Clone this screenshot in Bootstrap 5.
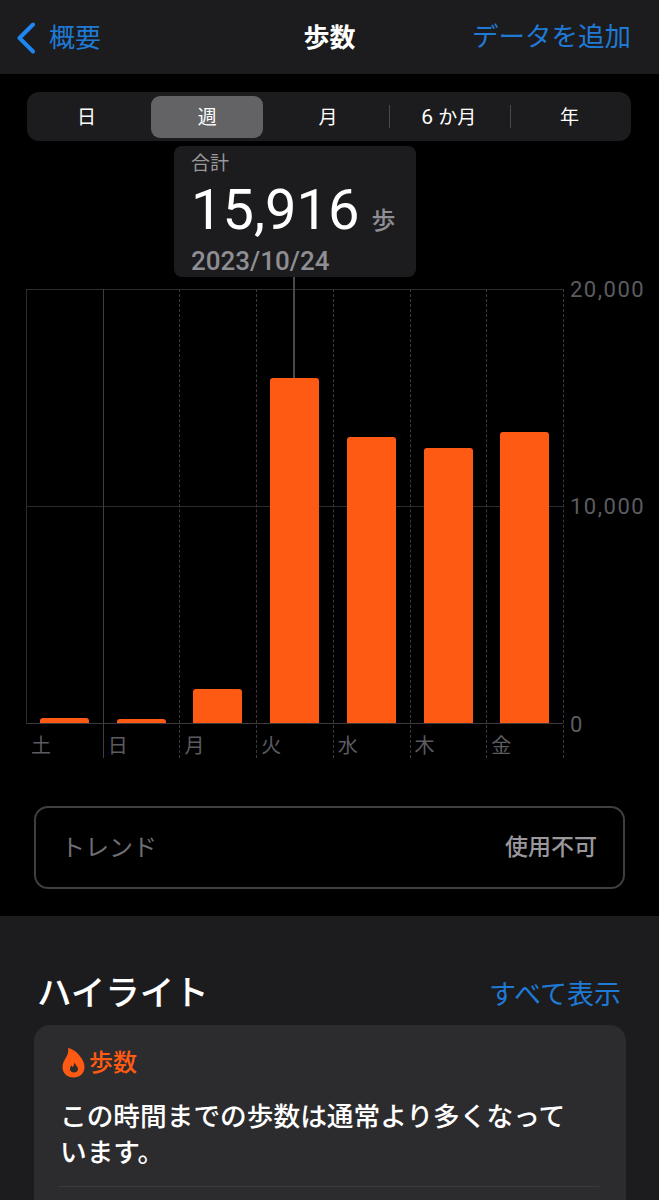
<!DOCTYPE html>
<html lang="ja">
<head>
    <meta charset="UTF-8">
    <meta name="viewport" content="width=device-width, initial-scale=1.0">
    <title>歩数</title>
    <link href="https://cdn.jsdelivr.net/npm/bootstrap@5.3.0/dist/css/bootstrap.min.css" rel="stylesheet">
    <style>
        body {
            background: #000;
            color: #fff;
            font-family: "Liberation Sans", "Noto Sans CJK JP", sans-serif;
            overflow: hidden;
            height: 1200px;
        }
        .top-bar {
            height: 74px;
            background: #1c1c1e;
            padding: 2px 28px 0 16px;
            position: relative;
        }
        .blue-text { color: #1f7ad6; }
        .back-label { font-size: 26px; margin-left: 13px; margin-top: 1px; }
        .bar-title {
            position: absolute;
            left: 0;
            right: 0;
            text-align: center;
            font-size: 26px;
            font-weight: 700;
        }
        .add-label { font-size: 26.5px; }
        .range-picker {
            height: 49px;
            margin: 18px 28px 0 27px;
            background: #1c1c1e;
            border-radius: 12px;
        }
        .range-item {
            flex: 1 1 0;
            font-size: 19px;
            position: relative;
            height: 100%;
            padding-top: 3px;
            padding-right: 2px;
        }
        .range-item.is-active::before {
            content: "";
            position: absolute;
            inset: 4px 6px 3px 3px;
            background: #636366;
            border-radius: 9px;
        }
        .range-item span { position: relative; }
        .range-six { font-size: 21px; font-family: Roboto, sans-serif; }
        .range-item.has-rule::after {
            content: "";
            position: absolute;
            left: 0;
            top: 13px;
            bottom: 13px;
            width: 1px;
            background: #48484a;
        }
        .chart-wrap {
            position: relative;
            height: 635px;
            margin-left: 26px;
        }
        .sum-tip {
            position: absolute;
            left: 148px;
            top: 5px;
            width: 242px;
            height: 131px;
            background: #1c1c1e;
            border-radius: 8px;
            padding: 4px 17px;
            z-index: 2;
            white-space: nowrap;
        }
        .sum-caption { font-size: 19px; line-height: 27px; color: #98989d; }
        .sum-value { font-family: Roboto, "Noto Sans CJK JP", sans-serif; font-size: 56px; line-height: 60px; margin-top: 3px; font-weight: 450; }
        .sum-unit { font-size: 24px; color: #8e8e93; margin-left: 12px; font-weight: 500; }
        .sum-date { font-family: Roboto, sans-serif; font-size: 26px; line-height: 32px; color: #8e8e93; margin-top: -6px; font-weight: 500; }
        .tip-stem {
            position: absolute;
            left: 267px;
            top: 136px;
            width: 2px;
            height: 102px;
            background: #48484a;
            z-index: 1;
        }
        .week-grid {
            position: absolute;
            left: 1px;
            top: 148px;
            width: 537px;
            height: 469px;
            display: grid;
            grid-template-columns: repeat(7, 1fr);
        }
        .week-grid::before {
            content: "";
            position: absolute;
            left: -1px;
            top: 0;
            width: 1px;
            height: 435px;
            background: #2c2c2e;
        }
        .week-col {
            position: relative;
            border-right: 1px dashed #3a3a3c;
        }
        .week-col.solid-edge { border-right: 1px solid #3f3f41; }
        .week-plot {
            height: 434px;
            display: flex;
            align-items: flex-end;
            padding-left: 13px;
        }
        .week-bar {
            width: 49px;
            background: #ff5a13;
            border-radius: 3px 3px 0 0;
            position: relative;
            z-index: 1;
        }
        .week-name {
            font-size: 20px;
            line-height: 24px;
            padding: 11px 0 0 4px;
            color: #5c5c60;
        }
        .h-rule {
            position: absolute;
            left: 0;
            width: 537px;
            height: 1px;
            background: #2c2c2e;
        }
        .h-rule.base { background: #3a3a3c; }
        .y-label {
            position: absolute;
            left: 544px;
            font-family: Roboto, sans-serif;
            font-size: 22px;
            line-height: 24px;
            letter-spacing: 1.5px;
            color: #5c5c60;
        }
        .trend-box {
            height: 83px;
            margin: 30px 34px 0 34px;
            border: 2px solid #3f3f41;
            border-radius: 14px;
            padding: 0 26px 0 25px;
            color: #6e6e73;
            font-size: 24px;
        }
        .trend-value { color: #98989d; font-weight: 500; font-size: 23px; }
        .lower-sheet {
            margin-top: 27px;
            background: #1c1c1e;
            height: 284px;
            padding: 0 33px 0 34px;
        }
        .sheet-head { height: 109px; padding: 50px 5px 0 3px; }
        .sheet-title { font-size: 34.5px; line-height: 54px; font-weight: 500; margin: 0; }
        .sheet-link { font-size: 27px; line-height: 54px; padding-top: 2px; }
        .note-panel {
            height: 190px;
            background: #2c2c2e;
            border-radius: 16px 16px 0 0;
            padding: 21px 40px 0 28px;
        }
        .note-tag { color: #ff5a13; font-size: 24px; font-weight: 500; line-height: 34px; gap: 4px; }
        .note-text { font-size: 26.7px; line-height: 36px; font-weight: 500; margin: 19px 0 0 -2px; }
        .note-rule { border-top: 1px solid #3a3a3c; margin: 15px -13px 0 -4px; }
    </style>
</head>
<body>
    <!-- Navigation Bar -->
    <div class="top-bar d-flex align-items-center justify-content-between">
        <div class="d-flex align-items-center blue-text">
            <svg width="20" height="32" viewBox="0 0 20 32" fill="none">
                <path d="M17 2.500 3.500 16 17 29.500" stroke="#1f86f0" stroke-width="4" stroke-linecap="round" stroke-linejoin="round"/>
            </svg>
            <span class="back-label">概要</span>
        </div>
        <div class="bar-title">歩数</div>
        <div class="add-label blue-text">データを追加</div>
    </div>

    <!-- Range picker -->
    <div class="range-picker d-flex align-items-center">
        <div class="range-item d-flex align-items-center justify-content-center"><span>日</span></div>
        <div class="range-item is-active d-flex align-items-center justify-content-center"><span>週</span></div>
        <div class="range-item d-flex align-items-center justify-content-center"><span>月</span></div>
        <div class="range-item has-rule d-flex align-items-center justify-content-center"><span><span class="range-six">6</span> か月</span></div>
        <div class="range-item has-rule d-flex align-items-center justify-content-center"><span>年</span></div>
    </div>

    <!-- Chart -->
    <div class="chart-wrap">
        <div class="sum-tip">
            <div class="sum-caption">合計</div>
            <div class="sum-value">15,916<span class="sum-unit">歩</span></div>
            <div class="sum-date">2023/10/24</div>
        </div>
        <div class="tip-stem"></div>
        <div class="h-rule" style="top: 148px"></div>
        <div class="h-rule" style="top: 365px"></div>
        <div class="h-rule base" style="top: 582px"></div>
        <div class="week-grid" id="weekGrid"></div>
        <div class="y-label" style="top: 137px">20,000</div>
        <div class="y-label" style="top: 354px">10,000</div>
        <div class="y-label" style="top: 572px">0</div>
    </div>

    <!-- Trend -->
    <div class="trend-box d-flex align-items-center justify-content-between">
        <span>トレンド</span>
        <span class="trend-value">使用不可</span>
    </div>

    <!-- Highlights -->
    <div class="lower-sheet">
        <div class="sheet-head d-flex justify-content-between align-items-start">
            <h2 class="sheet-title">ハイライト</h2>
            <span class="sheet-link blue-text">すべて表示</span>
        </div>
        <div class="note-panel">
            <div class="note-tag d-flex align-items-center">
                <svg width="23" height="30" viewBox="0 0 23 30">
                    <path fill="#ff5a13" fill-rule="evenodd" d="M6 0C8 .5 13 2 17 7c3.500 4 5.500 8 5.500 12 0 6.500-5 10.500-11 10.500C5 29.500.5 25 .5 19c0-4 2-7 3.500-9.500C5.500 7 7 4 6 0Zm6.500 14c.5 3 3.500 4.500 3.500 7 0 2-1.500 3.500-4 3.500S8 23 8 21c0-1.500.7-2.500 1.500-3.500.5 1 1 1.500 1.500 1.500.5-1.500 1.500-3 1.500-5Z"/>
                </svg>
                <span>歩数</span>
            </div>
            <p class="note-text">この時間までの歩数は通常より多くなっています。</p>
            <div class="note-rule"></div>
        </div>
    </div>

    <script src="https://cdn.jsdelivr.net/npm/bootstrap@5.3.0/dist/js/bootstrap.bundle.min.js"></script>
    <script>
        // bar heights in px, measured from the baseline
        const days = [
            { name: '土', height: 5 },
            { name: '日', height: 4 },
            { name: '月', height: 34 },
            { name: '火', height: 345 },
            { name: '水', height: 286 },
            { name: '木', height: 275 },
            { name: '金', height: 291 }
        ];

        const grid = document.getElementById('weekGrid');
        days.forEach((day, i) => {
            const col = document.createElement('div');
            col.className = i === 0 ? 'week-col solid-edge' : 'week-col';
            col.innerHTML = `<div class="week-plot"><div class="week-bar" style="height: ${day.height}px"></div></div>` +
                `<div class="week-name">${day.name}</div>`;
            grid.appendChild(col);
        });
    </script>
</body>
</html>
